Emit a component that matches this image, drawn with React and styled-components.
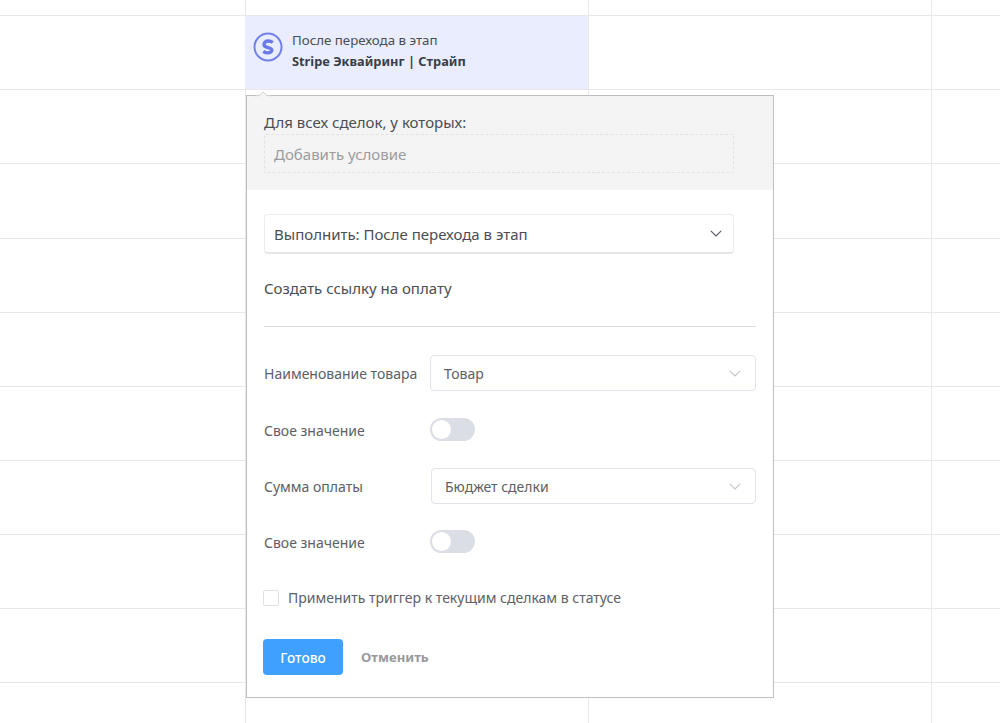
import React from 'react'
import styled, { createGlobalStyle } from 'styled-components'

const Global = createGlobalStyle`
    html, body {
        margin: 0;
        padding: 0;
        background: #fff;
        overflow: hidden;
    }
    body {
        font-family: "Noto Sans", "Open Sans", sans-serif;
        color: #3f424a;
    }
`

const Page = styled.div`
    position: relative;
    width: 1000px;
    height: 723px;
    overflow: hidden;
`

const Board = styled.div`
    display: grid;
    grid-template-columns: 245px 343px 343px 69px;
    grid-template-rows: 16.1px repeat(9, 74.15px) 60px;
`

const Cell = styled.div`
    box-sizing: border-box;
    border-right: 1px solid #e8e8ea;
    border-bottom: 1px solid #e8e8ea;
    margin-right: -1px;
    background: ${props => (props.$active ? '#e9edfd' : 'transparent')};
`

const TriggerCell = styled(Cell)`
    display: flex;
    align-items: flex-start;
    gap: 9px;
    padding: 14px 8px 0 8px;
`

const IconBox = styled.div`
    flex: none;
    margin-top: 2px;
    height: 30px;
`

const TriggerText = styled.div`
    font-size: 13.3px;
    line-height: 21px;
    color: #4a4d54;
`

const TriggerName = styled.div`
    font-size: 12.8px;
    font-weight: 700;
    color: #3b3e46;
`

const Popup = styled.div`
    position: absolute;
    left: 246px;
    top: 95px;
    box-sizing: border-box;
    width: 528px;
    height: 603px;
    background: #fff;
    border: 1px solid #bfbfbf;
`

const Arrow = styled.svg`
    position: absolute;
    left: 7px;
    top: -5px;
`

const Conditions = styled.div`
    background: #f4f4f4;
    height: 94px;
    padding: 16px 16px 0 17px;
    box-sizing: border-box;
`

const ConditionsTitle = styled.div`
    font-size: 15px;
    line-height: 21px;
    color: #4a4d54;
`

const AddCondition = styled.div`
    box-sizing: border-box;
    width: 470px;
    height: 39px;
    margin-top: 1px;
    padding-left: 9px;
    border: 1px dashed #e2e2e2;
    border-radius: 2px;
    display: flex;
    align-items: center;
    font-size: 15px;
    color: #9a9c9f;
`

const Body = styled.div`
    padding: 24px 17px 0 17px;
`

const ActionSelect = styled.div`
    box-sizing: border-box;
    width: 470px;
    height: 40px;
    padding: 0 11px 0 9px;
    border: 1px solid #ececef;
    border-bottom: 2px solid #e6e6ea;
    border-radius: 4px;
    display: flex;
    align-items: center;
    justify-content: space-between;
    font-size: 15px;
    color: #4a4d54;
`

const ActionName = styled.div`
    margin-top: 24px;
    font-size: 15px;
    line-height: 21px;
    color: #4a4d54;
`

const Divider = styled.div`
    height: 1px;
    background: #dcdde2;
    margin-top: 27px;
    margin-bottom: 28px;
`

const FieldRow = styled.div`
    display: flex;
    align-items: center;
    height: ${props => props.$h}px;
    margin-bottom: ${props => props.$mb}px;
`

const Label = styled.div`
    width: ${props => props.$w || 166}px;
    flex: none;
    font-size: 14px;
    color: #5d6066;
    padding-top: ${props => (props.$low ? 2 : 0)}px;
`

const Select = styled.div`
    box-sizing: border-box;
    flex: 1;
    height: 36px;
    padding: 0 14px 0 13px;
    border: 1px solid #e1e3ea;
    border-radius: 4px;
    display: flex;
    align-items: center;
    justify-content: space-between;
    font-size: 14px;
    color: #5d6066;
`

const Toggle = styled.div`
    box-sizing: border-box;
    width: 45px;
    height: 23px;
    padding: 2px;
    border-radius: 12px;
    background: #dcdee6;
`

const Knob = styled.div`
    width: 19px;
    height: 19px;
    border-radius: 50%;
    background: #fff;
`

const CheckRow = styled.label`
    display: flex;
    align-items: center;
    gap: 9px;
    margin-top: 35px;
    margin-left: -1px;
    font-size: 14px;
    color: #5d6066;
`

const Checkbox = styled.span`
    box-sizing: border-box;
    width: 16px;
    height: 16px;
    border: 1px solid #dfe1e7;
    border-radius: 2px;
`

const Actions = styled.div`
    display: flex;
    align-items: center;
    gap: 18px;
    margin-top: 32px;
    margin-left: -1px;
`

const DoneButton = styled.button`
    width: 80px;
    height: 36px;
    border: 0;
    border-radius: 4px;
    background: #40a0ff;
    color: #fff;
    font-family: inherit;
    font-size: 13.7px;
    font-weight: 500;
`

const CancelButton = styled.button`
    padding: 0;
    border: 0;
    background: transparent;
    color: #97999c;
    font-family: inherit;
    font-size: 13.2px;
    font-weight: 700;
`

const Chevron = ({ color }) => (
    <svg width="12" height="7" viewBox="0 0 12 7" fill="none">
        <path d="M0.8 0.8 L6 6 L11.2 0.8" stroke={color} strokeWidth="1.1" />
    </svg>
)

const StripeIcon = () => (
    <svg width="30" height="30" viewBox="0 0 30 30" fill="none">
        <circle cx="15" cy="15" r="13.5" stroke="#7280ea" strokeWidth="2" />
        <path
            d="M19.8 10.5 C18.5 9.5 16.9 9 15.2 9 C12.7 9 11 10.4 11 12.4 C11 14.5 13 15.1 15 15.6 C17.1 16.1 18.8 16.6 18.8 18.1 C18.8 19.8 17.1 20.9 15 20.9 C13.3 20.9 11.6 20.3 10.3 19.3"
            stroke="#6b7ae8"
            strokeWidth="3.4"
        />
    </svg>
)

const App = () => {
    const cells = []
    for (let row = 0; row < 11; row++) {
        for (let col = 0; col < 4; col++) {
            if (row === 1 && col === 1) {
                cells.push(
                    <TriggerCell key={`${row}-${col}`} $active>
                        <IconBox><StripeIcon /></IconBox>
                        <TriggerText>
                            После перехода в этап
                            <TriggerName>Stripe Эквайринг | Страйп</TriggerName>
                        </TriggerText>
                    </TriggerCell>
                )
            } else {
                cells.push(<Cell key={`${row}-${col}`} />)
            }
        }
    }

    return (
        <Page>
            <Global />
            <Board>{cells}</Board>
            <Popup>
                <Arrow width="18" height="6" viewBox="0 0 18 6">
                    <path d="M0 5.5 L5 5 L9 1 L13 5 L18 5.5 V6 H0 Z" fill="#f4f4f4" />
                    <path d="M1 5 L5 4.5 L9 0.8 L13 4.5 L17 5" fill="none" stroke="#d4d4d4" strokeWidth="1" />
                </Arrow>
                <Conditions>
                    <ConditionsTitle>Для всех сделок, у которых:</ConditionsTitle>
                    <AddCondition>Добавить условие</AddCondition>
                </Conditions>
                <Body>
                    <ActionSelect>
                        Выполнить: После перехода в этап
                        <Chevron color="#55585f" />
                    </ActionSelect>
                    <ActionName>Создать ссылку на оплату</ActionName>
                    <Divider />
                    <FieldRow $h={36} $mb={27}>
                        <Label>Наименование товара</Label>
                        <Select>
                            Товар
                            <Chevron color="#c3c5cc" />
                        </Select>
                    </FieldRow>
                    <FieldRow $h={23} $mb={27}>
                        <Label $low>Свое значение</Label>
                        <Toggle><Knob /></Toggle>
                    </FieldRow>
                    <FieldRow $h={36} $mb={26}>
                        <Label $w={167}>Сумма оплаты</Label>
                        <Select>
                            Бюджет сделки
                            <Chevron color="#c3c5cc" />
                        </Select>
                    </FieldRow>
                    <FieldRow $h={23} $mb={0}>
                        <Label $low>Свое значение</Label>
                        <Toggle><Knob /></Toggle>
                    </FieldRow>
                    <CheckRow>
                        <Checkbox />
                        Применить триггер к текущим сделкам в статусе
                    </CheckRow>
                    <Actions>
                        <DoneButton>Готово</DoneButton>
                        <CancelButton>Отменить</CancelButton>
                    </Actions>
                </Body>
            </Popup>
        </Page>
    )
}

export default App
